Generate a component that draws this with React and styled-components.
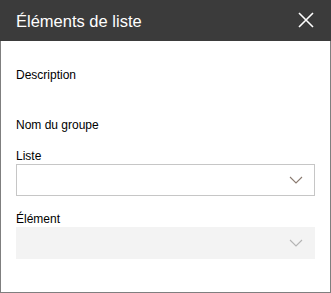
import React from "react";
import styled, { createGlobalStyle } from "styled-components";

const GlobalStyle = createGlobalStyle`
  html, body {
    margin: 0;
    padding: 0;
    background: #ffffff;
  }
  * {
    box-sizing: border-box;
  }
`;

const Panel = styled.div`
  width: 331px;
  height: 293px;
  border: 1px solid #7f7f7f;
  border-top: none;
  background: #ffffff;
  display: flex;
  flex-direction: column;
  font-family: "Liberation Sans", Arial, sans-serif;
  color: #000000;
`;

const Header = styled.div`
  height: 41px;
  margin: 0 -1px 0 -1px;
  padding: 0 17px 0 16px;
  background: #3b3b3b;
  display: flex;
  align-items: center;
  justify-content: space-between;
`;

const Title = styled.h1`
  margin: 0;
  font-size: 16.5px;
  font-weight: 400;
  color: #ffffff;
  line-height: 20px;
  padding-top: 1px;
`;

const CloseButton = styled.button`
  width: 16px;
  height: 16px;
  padding: 0;
  border: none;
  background: none;
  display: flex;
  cursor: pointer;
  margin-top: -2px;
`;

const Body = styled.div`
  padding: 26px 15px 0 15px;
  display: flex;
  flex-direction: column;
`;

const Text = styled.div`
  font-size: 12px;
  line-height: 16px;
  margin-bottom: ${(p) => p.$gap || 0}px;
`;

const Field = styled.div`
  display: flex;
  flex-direction: column;
  margin-bottom: 16px;
`;

const Label = styled.label`
  font-size: 12px;
  line-height: 15px;
`;

const Select = styled.div`
  height: 32px;
  border: ${(p) => (p.$disabled ? "none" : "1px solid #c6c6c6")};
  background: ${(p) => (p.$disabled ? "#f3f3f3" : "#ffffff")};
  display: flex;
  align-items: center;
  justify-content: flex-end;
  padding-right: ${(p) => (p.$disabled ? 12 : 11)}px;
`;

const Chevron = ({ color }) => (
  <svg width="14" height="8" viewBox="0 0 14 8">
    <path d="M1 1 L7 7 L13 1" fill="none" stroke={color} strokeWidth="1.1" />
  </svg>
);

const CloseIcon = () => (
  <svg width="16" height="16" viewBox="0 0 16 16">
    <path d="M1 1 L15 15 M15 1 L1 15" stroke="#ffffff" strokeWidth="1.6" />
  </svg>
);

export default function App() {
  return (
    <>
      <GlobalStyle />
      <Panel>
        <Header>
          <Title>Éléments de liste</Title>
          <CloseButton aria-label="Fermer">
            <CloseIcon />
          </CloseButton>
        </Header>
        <Body>
          <Text $gap={34}>Description</Text>
          <Text $gap={16}>Nom du groupe</Text>
          <Field>
            <Label>Liste</Label>
            <Select>
              <Chevron color="#8a7a70" />
            </Select>
          </Field>
          <Field>
            <Label>Élément</Label>
            <Select $disabled>
              <Chevron color="#b4b4b4" />
            </Select>
          </Field>
        </Body>
      </Panel>
    </>
  );
}
